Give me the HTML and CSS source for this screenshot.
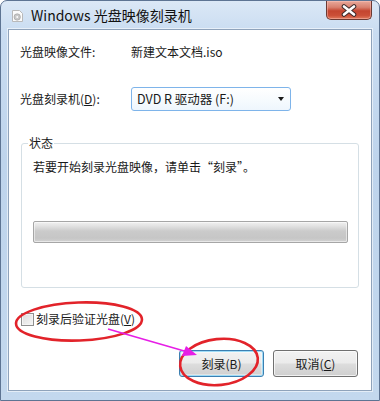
FILE: index.html
```html
<!DOCTYPE html>
<html lang="zh-CN">
<head>
<meta charset="utf-8">
<title>Windows 光盘映像刻录机</title>
<link rel="stylesheet" href="styles.css">
</head>
<body>
<div class="stage">
  <div class="window">
    <div class="titlebar">
      <svg class="app-icon" width="11" height="12" viewBox="0 0 11 12">
        <path d="M0.5 0.5 H7.5 L10.5 3.5 V11.5 H0.5 Z" fill="#fbfbfb" stroke="#b9b9b9"/>
        <circle cx="5.2" cy="7" r="3.2" fill="#c9c9c9" stroke="#9a9a9a" stroke-width="0.6"/>
        <circle cx="5.2" cy="7" r="0.9" fill="#fff"/>
      </svg>
      <div class="title">Windows 光盘映像刻录机</div>
      <div class="close">
        <svg width="18" height="13" viewBox="0 0 18 13">
          <path d="M4 2.5 L14 10.5 M14 2.5 L4 10.5" stroke="#3d2b2b" stroke-width="4.6" stroke-linecap="round"/>
          <path d="M4 2.5 L14 10.5 M14 2.5 L4 10.5" stroke="#ffffff" stroke-width="2.6" stroke-linecap="round"/>
        </svg>
      </div>
    </div>
    <div class="client">
      <div class="row">
        <div class="label">光盘映像文件:</div>
        <div class="value">新建文本文档.iso</div>
      </div>
      <div class="row row-drive">
        <div class="label">光盘刻录机(<u>D</u>):</div>
        <div class="combo">
          <span>DVD R 驱动器 (F:)</span>
          <span class="arrow"></span>
        </div>
      </div>
      <fieldset class="group">
        <legend>状态</legend>
        <div class="status">若要开始刻录光盘映像，请单击“刻录”。</div>
        <div class="progress"></div>
      </fieldset>
      <div class="check-row">
        <span class="checkbox"></span>
        <span class="check-label">刻录后验证光盘(<u>V</u>)</span>
      </div>
      <div class="buttons">
        <div class="btn btn-default">刻录(B)</div>
        <div class="btn">取消(<u>C</u>)</div>
      </div>
    </div>
  </div>
  <svg class="overlay" width="380" height="401" viewBox="0 0 380 401">
    <ellipse cx="79" cy="321.5" rx="63" ry="19" fill="none" stroke="#e2232a" stroke-width="2.6" transform="rotate(-2 79 321.5)"/>
    <ellipse cx="219" cy="362" rx="39" ry="23" fill="none" stroke="#e2232a" stroke-width="2.6" transform="rotate(-6 219 362)"/>
    <line x1="108" y1="329" x2="186" y2="351.5" stroke="#e61ee6" stroke-width="1.6"/>
    <polygon points="197,355 182,356 186,346" fill="#e61ee6"/>
  </svg>
</div>
</body>
</html>
```
FILE: styles.css
```css
html, body {
  margin: 0;
  padding: 0;
  background: #ffffff;
}

.stage {
  position: relative;
  width: 380px;
  height: 401px;
  overflow: hidden;
  font-family: "Noto Sans CJK SC", "Noto Sans", sans-serif;
  font-size: 12px;
  color: #1a1a1a;
}

.window {
  width: 380px;
  height: 401px;
  box-sizing: border-box;
  border: 1px solid #5d7493;
  border-radius: 7px 7px 0 0;
  background: linear-gradient(180deg, #dbe8f6 0%, #c9dcf1 8%, #bed4ec 40%, #c3d8ee 100%);
  display: flex;
  flex-direction: column;
}

.titlebar {
  height: 28px;
  display: flex;
  align-items: flex-start;
  padding-left: 11px;
  padding-right: 7px;
  flex-shrink: 0;
}

.app-icon {
  margin-top: 9px;
  display: block;
}

.title {
  margin-left: 8px;
  margin-top: 5px;
  font-size: 14px;
  line-height: 18px;
  color: #111;
}

.close {
  margin-left: auto;
  width: 46px;
  height: 19px;
  box-sizing: border-box;
  border: 1px solid #6b3a33;
  border-top: none;
  border-radius: 0 0 5px 5px;
  background: linear-gradient(180deg, #e9a99b 0%, #d8806f 35%, #c4452f 55%, #cb4f37 80%, #e07a5c 100%);
  box-shadow: inset 0 0 0 1px rgba(255, 200, 190, 0.45);
  display: flex;
  align-items: center;
  justify-content: center;
}

.close svg {
  display: block;
}

.client {
  margin: 0 7px;
  height: 362px;
  box-sizing: border-box;
  background: #ffffff;
  border: 1px solid #8fa3bb;
  box-shadow: 0 0 0 1px rgba(255, 255, 255, 0.55);
  padding: 14px 13px 0 11px;
}

.row {
  display: flex;
  align-items: center;
  line-height: 16px;
}

.label {
  width: 111px;
  flex-shrink: 0;
}

.row-drive {
  margin-top: 27px;
  height: 24px;
}

.combo {
  width: 160px;
  height: 24px;
  box-sizing: border-box;
  border: 1px solid #7eb4ea;
  border-radius: 3px;
  background: linear-gradient(180deg, #ffffff 0%, #f7fbfe 50%, #eef6fd 100%);
  display: flex;
  align-items: center;
  padding: 0 6px 0 5px;
  font-size: 12.5px;
}

.arrow {
  margin-left: auto;
  width: 0;
  height: 0;
  border-left: 3.5px solid transparent;
  border-right: 3.5px solid transparent;
  border-top: 4px solid #1a1a1a;
}

.group {
  margin: 24px 0 0 1px;
  width: 338px;
  box-sizing: border-box;
  border: 1px solid #d5dfe5;
  border-radius: 3px;
  padding: 0 0 44px 6px;
}

.group legend {
  padding: 0 1px;
  line-height: 16px;
}

.status {
  margin: 8px 0 0 5px;
  line-height: 16px;
}

.progress {
  margin: 46px 0 0 5px;
  width: 315px;
  height: 22px;
  box-sizing: border-box;
  border: 1px solid #a6a6a6;
  border-radius: 2px;
  background: linear-gradient(180deg, #f1f1f1 0%, #e2e2e2 20%, #cbcbcb 45%, #c6c6c6 80%, #d2d2d2 100%);
  box-shadow: inset 0 0 0 1px rgba(255, 255, 255, 0.5);
}

.check-row {
  margin-top: 23px;
  margin-left: 1px;
  display: flex;
  align-items: center;
  line-height: 16px;
}

.checkbox {
  width: 13px;
  height: 13px;
  box-sizing: border-box;
  border: 1px solid #8e8f8f;
  background: linear-gradient(135deg, #dcdcdc 0%, #f6f6f6 100%);
  box-shadow: inset 0 0 0 1px #f4f4f4;
}

.check-label {
  margin-left: 2px;
}

.buttons {
  margin-top: 23px;
  display: flex;
  justify-content: flex-end;
  gap: 9px;
}

.btn {
  width: 85px;
  height: 27px;
  box-sizing: border-box;
  border: 1px solid #707070;
  border-radius: 3px;
  background: linear-gradient(180deg, #f2f2f2 0%, #ebebeb 48%, #dddddd 52%, #cfcfcf 100%);
  box-shadow: inset 0 0 0 1px rgba(255, 255, 255, 0.7);
  display: flex;
  align-items: center;
  justify-content: center;
  line-height: 16px;
}

.btn-default {
  border-color: #3c7fb1;
  box-shadow: inset 0 0 0 1px #9fdcf7, inset 0 0 0 2px rgba(255, 255, 255, 0.4);
  background: linear-gradient(180deg, #f2f2f2 0%, #ebebeb 48%, #dddddd 52%, #cfcfcf 100%);
}

.overlay {
  position: absolute;
  left: 0;
  top: 0;
  pointer-events: none;
}
```
